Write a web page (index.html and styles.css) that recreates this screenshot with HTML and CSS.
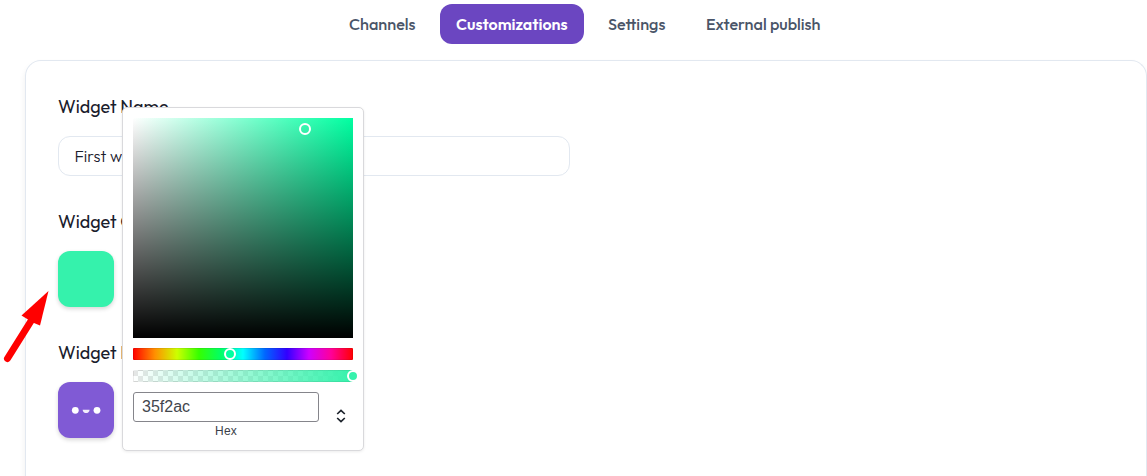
FILE: index.html
```html
<!DOCTYPE html>
<html lang="en">
<head>
<meta charset="utf-8">
<title>Widget customizations</title>
<link rel="stylesheet" href="styles.css">
</head>
<body>
<nav class="tabs">
  <a class="tab tab-channels">Channels</a>
  <a class="tab tab-active">Customizations</a>
  <a class="tab tab-settings">Settings</a>
  <a class="tab tab-publish">External publish</a>
</nav>
<main class="card">
  <section class="field">
    <label class="label" for="name">Widget Name</label>
    <input class="name-input" id="name" value="First widget">
  </section>
  <section class="field">
    <div class="label">Widget Color</div>
    <div class="swatch"></div>
  </section>
  <section class="field">
    <div class="label">Widget Icon</div>
    <div class="swatch swatch-icon">
      <svg width="56" height="56" viewBox="0 0 56 56" fill="#fff"><circle cx="17.3" cy="28.3" r="3.4"/><circle cx="39" cy="28.3" r="3.4"/><path d="M24.6 27.7h7c-.3 4.5-6.7 4.5-7 0z" opacity=".9"/></svg>
    </div>
  </section>
</main>
<div class="picker">
  <div class="saturation"><span class="thumb thumb-sat"></span></div>
  <div class="hue"><span class="thumb thumb-hue"></span></div>
  <div class="alpha"><span class="thumb thumb-alpha"></span></div>
  <div class="controls">
    <div class="hex">
      <input class="hex-input" value="35f2ac">
      <span class="hex-label">Hex</span>
    </div>
    <svg class="switcher" width="10" height="14" viewBox="0 0 10 14" fill="none" stroke="#1c222b" stroke-width="1.7"><path d="M1.2 5L5 1.4 8.8 5M1.2 9L5 12.6 8.8 9"/></svg>
  </div>
</div>
<svg class="pointer" width="50" height="80" viewBox="0 0 50 80"><path d="M7.5 68.5L31 31" stroke="#f00" stroke-width="7" stroke-linecap="round"/><path d="M48.5 1L21.5 25.5 28 29.5 34 33 40 35.5z" fill="#f00"/></svg>
</body>
</html>
```
FILE: styles.css
```css
* { box-sizing: border-box; }
body {
  margin: 0;
  height: 476px;
  overflow: hidden;
  position: relative;
  display: flex;
  flex-direction: column;
  background: #fff;
  color: #1a202c;
  font-family: Outfit, Lato, sans-serif;
}
.tabs {
  display: flex;
  flex: none;
  gap: 8px;
  padding: 4px 0 0 333px;
}
.tab {
  height: 40px;
  padding: 0 0 0 16px;
  border-radius: 12px;
  line-height: 40px;
  font-size: 16.2px;
  font-weight: 500;
  color: #4a5568;
  white-space: nowrap;
}
.tab-channels { width: 99px; }
.tab-active { width: 144px; background: #6b46c1; color: #fff; font-size: 16px; font-weight: 600; }
.tab-settings { width: 90px; }
.tab-publish { width: 148px; }
.card {
  width: 1122px;
  flex: 1;
  min-height: 0;
  margin: 16px 0 0 25px;
  padding: 32px 32px 0;
  border: 1px solid #e2e8f0;
  border-bottom: 0;
  border-radius: 16px 16px 0 0;
  box-shadow: 0 4px 6px rgba(0, 0, 0, .07);
}
.field { display: flex; flex-direction: column; }
.field + .field { margin-top: 32px; }
.label {
  height: 28px;
  margin-bottom: 15px;
  line-height: 27px;
  font-size: 18px;
}
.name-input {
  width: 512px;
  height: 40px;
  padding: 0 15.5px;
  border: 1px solid #e2e8f0;
  border-radius: 12px;
  background: #fff;
  color: #1a202c;
  font: 300 16.4px Outfit, Lato, sans-serif;
}
.swatch {
  width: 56px;
  height: 56px;
  border-radius: 12px;
  background: #35f2ac;
  box-shadow: 0 2px 4px rgba(0, 0, 0, .16);
}
.swatch-icon { background: #805ad5; }
.picker {
  position: absolute;
  left: 122px;
  top: 107px;
  width: 242px;
  height: 344px;
  padding: 10px;
  display: flex;
  flex-direction: column;
  gap: 10px;
  border: 1px solid #d9d9dc;
  border-radius: 5px;
  background: #fff;
  box-shadow: 0 1px 3px rgba(0, 0, 0, .08);
  font-family: "Liberation Sans", sans-serif;
}
.saturation, .hue, .alpha { position: relative; width: 220px; flex: none; }
.saturation {
  height: 220px;
  background: linear-gradient(to top, #000, transparent), linear-gradient(to right, #fff, #00ffa1);
}
.hue, .alpha { height: 12px; border-radius: 1px; box-shadow: inset 0 0 0 1px rgba(0, 0, 0, .07); }
.hue {
  background: linear-gradient(to right, #f00 0%, #ff9000 10%, #cdff00 20%, #35ff00 30%, #0f6 40%, #0ff 50%, #06f 60%, #3200ff 70%, #cd00ff 80%, #f09 90%, #f00 100%);
}
.alpha {
  background: linear-gradient(to right, rgba(53, 242, 172, 0), #35f2ac), repeating-conic-gradient(#fff 0 25%, #e6e6e6 0 50%) 0 1px / 10px 10px;
}
.thumb {
  position: absolute;
  width: 12px;
  height: 12px;
  border: 2px solid #fff;
  border-radius: 50%;
}
.thumb-sat { left: 166px; top: 5px; }
.thumb-hue { left: 91px; top: 0; background: #00ffa1; }
.thumb-alpha { left: 214px; top: 0; background: #35f2ac; }
.controls { display: flex; }
.hex { width: 186px; display: flex; flex-direction: column; align-items: center; }
.hex-input {
  width: 186px;
  height: 30px;
  padding: 0 8px 1px;
  border: 1px solid #85858b;
  border-radius: 3px;
  background: #fff;
  color: #42464d;
  font: 16px "Liberation Sans", sans-serif;
}
.hex-label { line-height: 14px; margin-top: 2px; font-size: 12px; letter-spacing: 0.2px; color: #3b3f49; }
.switcher { margin: 17px 0 0 17px; }
.pointer { position: absolute; left: 0; top: 290px; }
```
